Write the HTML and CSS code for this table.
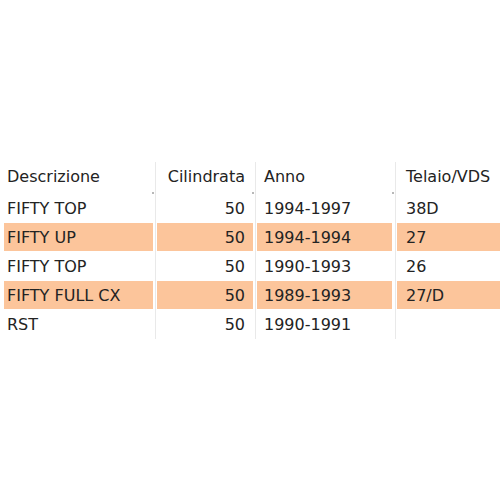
FILE: index.html
```html
<!DOCTYPE html>
<html>
<head>
<meta charset="utf-8">
<link rel="stylesheet" href="styles.css">
</head>
<body>
<table class="grid">
  <colgroup>
    <col class="c1"><col class="c2"><col class="c3"><col class="c4">
  </colgroup>
  <thead>
    <tr class="head">
      <td class="k1"><div class="cell">Descrizione</div></td>
      <td class="k2"><div class="cell num">Cilindrata</div></td>
      <td class="k3"><div class="cell">Anno</div></td>
      <td class="k4"><div class="cell">Telaio/VDS</div></td>
    </tr>
  </thead>
  <tbody>
    <tr>
      <td class="k1"><div class="cell">FIFTY TOP</div></td>
      <td class="k2"><div class="cell num">50</div></td>
      <td class="k3"><div class="cell">1994-1997</div></td>
      <td class="k4"><div class="cell">38D</div></td>
    </tr>
    <tr class="hl">
      <td class="k1"><div class="cell">FIFTY UP</div></td>
      <td class="k2"><div class="cell num">50</div></td>
      <td class="k3"><div class="cell">1994-1994</div></td>
      <td class="k4"><div class="cell">27</div></td>
    </tr>
    <tr>
      <td class="k1"><div class="cell">FIFTY TOP</div></td>
      <td class="k2"><div class="cell num">50</div></td>
      <td class="k3"><div class="cell">1990-1993</div></td>
      <td class="k4"><div class="cell">26</div></td>
    </tr>
    <tr class="hl">
      <td class="k1"><div class="cell">FIFTY FULL CX</div></td>
      <td class="k2"><div class="cell num">50</div></td>
      <td class="k3"><div class="cell">1989-1993</div></td>
      <td class="k4"><div class="cell">27/D</div></td>
    </tr>
    <tr>
      <td class="k1"><div class="cell">RST</div></td>
      <td class="k2"><div class="cell num">50</div></td>
      <td class="k3"><div class="cell">1990-1991</div></td>
      <td class="k4"><div class="cell"></div></td>
    </tr>
  </tbody>
</table>
</body>
</html>
```
FILE: styles.css
```css
html, body {
  margin: 0;
  padding: 0;
  background: #ffffff;
}
body {
  font-family: "DejaVu Sans", Verdana, sans-serif;
  font-size: 16px;
  color: #232323;
}
.grid {
  margin-top: 162px;
  width: 500px;
  table-layout: fixed;
  border-collapse: separate;
  border-spacing: 0;
}
.c1 { width: 156px; }
.c2 { width: 100px; }
.c3 { width: 140px; }
.c4 { width: 104px; }
.grid td {
  padding: 0 0 1px 0;
  box-sizing: border-box;
  vertical-align: top;
  white-space: nowrap;
}
.k1, .k2, .k3 {
  border-right: 1px solid #e9e9e9;
}
.head td {
  position: relative;
}
.head .k1::after,
.head .k2::after,
.head .k3::after {
  content: "";
  position: absolute;
  right: 1px;
  bottom: 0;
  width: 2px;
  height: 2px;
  background: #b8b8b8;
}
.cell {
  height: 28px;
  box-sizing: border-box;
  padding-top: 2px;
  line-height: 26px;
  overflow: hidden;
}
.head .cell {
  height: 31px;
}
.k1 .cell { margin: 0 2px 0 4px; padding-left: 3px; }
.k2 .cell { margin: 0 2px 0 1px; padding-right: 8px; }
.k3 .cell { margin: 0 3px 0 1px; padding-left: 7px; }
.k4 .cell { margin: 0 0 0 1px; padding-left: 9px; }
.num { text-align: right; }
.hl .cell {
  background: #fcc59b;
}
```
